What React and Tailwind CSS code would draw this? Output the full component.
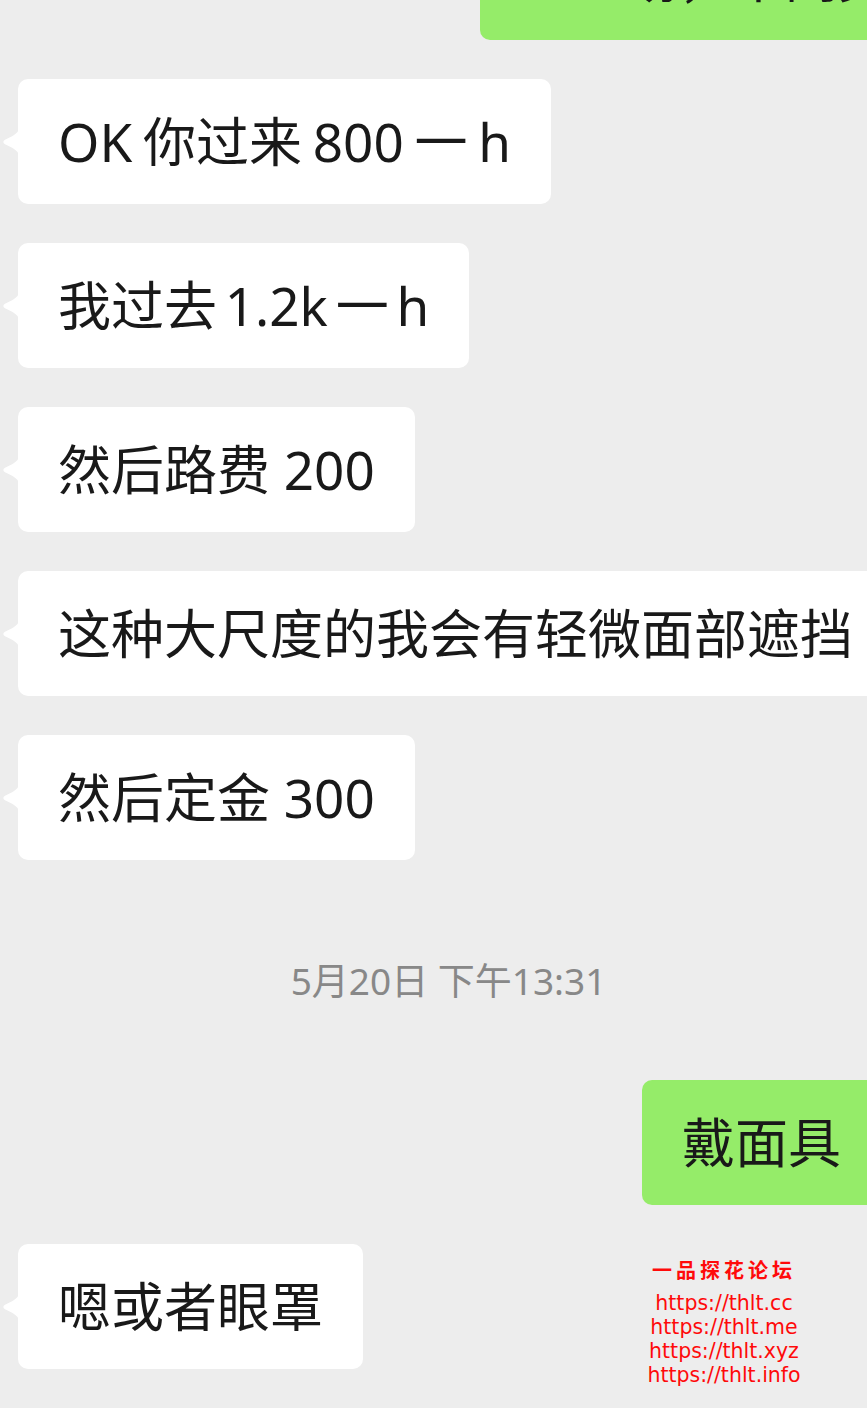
const font = { fontFamily: "'Noto Sans', 'Noto Sans CJK SC', sans-serif" };

const Tail = () => (
  <svg width="17" height="28" viewBox="0 0 17 28" className="-mr-px shrink-0">
    <path d="M17 0 C17 7 5 10 2 12.5 Q0.5 14 2 15.5 C5 18 17 21 17 28 Z" fill="#ffffff" />
  </svg>
);

const Incoming = ({ text, spacing = "" }) => (
  <div className="flex items-center pl-[2px]">
    <Tail />
    <div
      className={`h-[125px] flex items-center px-10 bg-white rounded-[10px] whitespace-nowrap text-[53px] text-[#191919] ${spacing}`}
    >
      {text}
    </div>
  </div>
);

const Outgoing = ({ text, offset }) => (
  <div className={`flex ${offset}`}>
    <div className="h-[125px] flex items-center px-10 bg-[#95ec69] rounded-[10px] whitespace-nowrap text-[53px] text-[#191919]">
      {text}
    </div>
  </div>
);

export default function App() {
  return (
    <div className="relative w-[867px] h-[1408px] overflow-hidden bg-[#ededed]" style={font}>
      <div className="flex flex-col gap-[39px] mt-[-85px]">
        <Outgoing text="上一场，不同男人" offset="ml-[480px]" />
        <Incoming text="OK 你过来 800 一 h" spacing="[word-spacing:-3px]" />
        <Incoming text="我过去 1.2k 一 h" spacing="[word-spacing:-6px]" />
        <Incoming text="然后路费 200" />
        <Incoming text="这种大尺度的我会有轻微面部遮挡" />
        <Incoming text="然后定金 300" />
      </div>

      <div className="mt-[96px] h-[50px] pl-[30px] flex items-center justify-center text-[37px] text-[#888888]">
        5月20日 下午13:31
      </div>

      <div className="flex flex-col gap-[39px] mt-[74px]">
        <Outgoing text="戴面具" offset="ml-[642px]" />
        <Incoming text="嗯或者眼罩" />
      </div>

      {/* watermark */}
      <div className="absolute left-[624px] top-[1256px] w-[200px] flex flex-col items-center text-[#ff0a0a]">
        <div className="h-[28px] text-[20px] font-bold tracking-[4px] leading-[28px]" style={{ fontFamily: "'Noto Sans CJK SC', sans-serif" }}>
          一品探花论坛
        </div>
        <div className="mt-[7px] text-[20.5px] leading-[24px] text-center" style={{ fontFamily: "'DejaVu Sans', sans-serif" }}>
          <div>https://thlt.cc</div>
          <div>https://thlt.me</div>
          <div>https://thlt.xyz</div>
          <div>https://thlt.info</div>
        </div>
      </div>
    </div>
  );
}
